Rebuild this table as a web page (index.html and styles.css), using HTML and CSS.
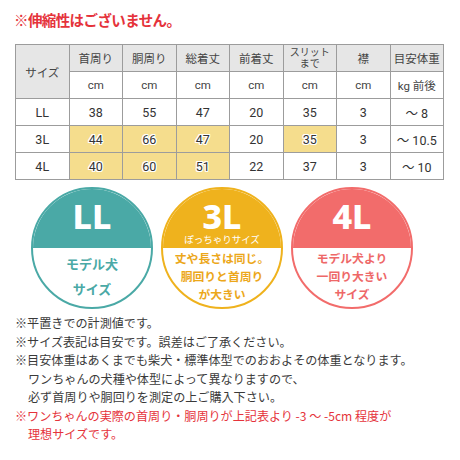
FILE: index.html
```html
<!DOCTYPE html>
<html lang="ja">
<head>
    <meta charset="UTF-8">
    <title>サイズ表</title>
    <link rel="stylesheet" href="styles.css">
</head>
<body>
    <p class="title">※伸縮性はございません。</p>

    <table class="size-table">
        <tr class="head">
            <th rowspan="2" class="size-col">サイズ</th>
            <th>首周り</th>
            <th>胴周り</th>
            <th>総着丈</th>
            <th>前着丈</th>
            <th class="small">スリット<br>まで</th>
            <th>襟</th>
            <th>目安体重</th>
        </tr>
        <tr class="unit">
            <td>cm</td>
            <td>cm</td>
            <td>cm</td>
            <td>cm</td>
            <td>cm</td>
            <td>cm</td>
            <td>kg 前後</td>
        </tr>
        <tr>
            <td>LL</td>
            <td>38</td>
            <td>55</td>
            <td>47</td>
            <td>20</td>
            <td>35</td>
            <td>3</td>
            <td>～ 8</td>
        </tr>
        <tr>
            <td>3L</td>
            <td class="hl">44</td>
            <td class="hl">66</td>
            <td class="hl">47</td>
            <td>20</td>
            <td class="hl">35</td>
            <td>3</td>
            <td>～ 10.5</td>
        </tr>
        <tr>
            <td>4L</td>
            <td class="hl">40</td>
            <td class="hl">60</td>
            <td class="hl">51</td>
            <td>22</td>
            <td>37</td>
            <td>3</td>
            <td>～ 10</td>
        </tr>
    </table>

    <div class="circles">
        <div class="circle teal">
            <div class="top">
                <span class="big">LL</span>
            </div>
            <div class="bottom ll">モデル犬<br>サイズ</div>
        </div>
        <div class="circle yellow">
            <div class="top">
                <span class="big">3L</span>
                <span class="sub">ぽっちゃりサイズ</span>
            </div>
            <div class="bottom">丈や長さは同じ。<br>胴回りと首周り<br>が大きい</div>
        </div>
        <div class="circle coral">
            <div class="top">
                <span class="big">4L</span>
            </div>
            <div class="bottom">モデル犬より<br>一回り大きい<br>サイズ</div>
        </div>
    </div>

    <div class="notes">
        <p>※平置きでの計測値です。</p>
        <p>※サイズ表記は目安です。誤差はご了承ください。</p>
        <p>※目安体重はあくまでも柴犬・標準体型でのおおよその体重となります。</p>
        <p class="indent">ワンちゃんの犬種や体型によって異なりますので、</p>
        <p class="indent">必ず首周りや胴回りを測定の上ご購入下さい。</p>
        <p class="red">※ワンちゃんの実際の首周り・胴周りが上記表より -3 ～ -5cm 程度が</p>
        <p class="red indent">理想サイズです。</p>
    </div>
</body>
</html>
```

FILE: styles.css
```css
body {
    margin: 0;
    background-color: #fff;
    font-family: Roboto, "Noto Sans CJK JP", sans-serif;
    color: #444;
}

.title {
    margin: 13px 0 0 14px;
    font-size: 14.5px;
    line-height: 18px;
    font-weight: bold;
    color: #e5333b;
    letter-spacing: -0.6px;
}

.size-table {
    margin: 13px 0 0 15px;
    width: 429px;
    border-collapse: collapse;
    table-layout: fixed;
    border: 1px solid #8c8c8c;
}

.size-table th,
.size-table td {
    border: 1px solid #9c9c9c;
    text-align: center;
    padding: 0;
    font-weight: normal;
    height: 26px;
}

.size-table th {
    background-color: #e6e6e6;
    font-size: 11.5px;
    color: #444;
}

.size-table th.small {
    font-size: 10px;
    line-height: 11px;
}

.size-table th.size-col {
    font-size: 11.5px;
}

.size-table td {
    font-size: 12.5px;
    color: #333;
}

.size-table .unit td {
    font-size: 11.5px;
    color: #444;
}

.size-table td.hl {
    background-color: #f5dd8d;
    text-shadow: 1px 0 0 #fff, -1px 0 0 #fff, 0 1px 0 #fff, 0 -1px 0 #fff,
        1px 1px 0 #fff, -1px -1px 0 #fff, 1px -1px 0 #fff, -1px 1px 0 #fff;
}

.circles {
    display: flex;
    gap: 8px;
    margin: 7px 0 0 31px;
}

.circle {
    width: 122px;
    height: 122px;
    box-sizing: border-box;
    border-radius: 50%;
    border: 2px solid;
    overflow: hidden;
    display: flex;
    flex-direction: column;
}

.circle .top {
    height: 59px;
    display: flex;
    flex-direction: column;
    align-items: center;
    padding-top: 13px;
    box-sizing: border-box;
    color: #fff;
}

.circle .big {
    font-family: "Noto Sans", sans-serif;
    font-size: 34px;
    line-height: 28px;
    font-weight: 800;
}

.circle .sub {
    font-size: 9.5px;
    line-height: 11px;
    margin-top: 4px;
}

.circle .bottom {
    flex: 1;
    display: flex;
    align-items: center;
    justify-content: center;
    text-align: center;
    font-size: 11.8px;
    line-height: 18px;
    font-weight: bold;
    padding-bottom: 2px;
}

.circle .bottom.ll {
    font-size: 13px;
    line-height: 25px;
}

.teal {
    border-color: #4aa9a6;
}

.teal .top {
    background-color: #4aa9a6;
}

.teal .bottom {
    color: #4aa9a6;
}

.yellow {
    border-color: #efb21d;
}

.yellow .top {
    background-color: #efb21d;
}

.yellow .bottom {
    color: #eca71a;
}

.coral {
    border-color: #f26c6b;
}

.coral .top {
    background-color: #f26c6b;
}

.coral .bottom {
    color: #ee6868;
}

.notes {
    margin: 5px 0 0 15px;
    font-family: "Noto Sans CJK JP", sans-serif;
    font-size: 12.1px;
    line-height: 18.5px;
    color: #3a3a3a;
}

.notes p {
    margin: 0;
    white-space: nowrap;
}

.notes .indent {
    padding-left: 13px;
}

.notes .red {
    color: #e5333b;
}
```
